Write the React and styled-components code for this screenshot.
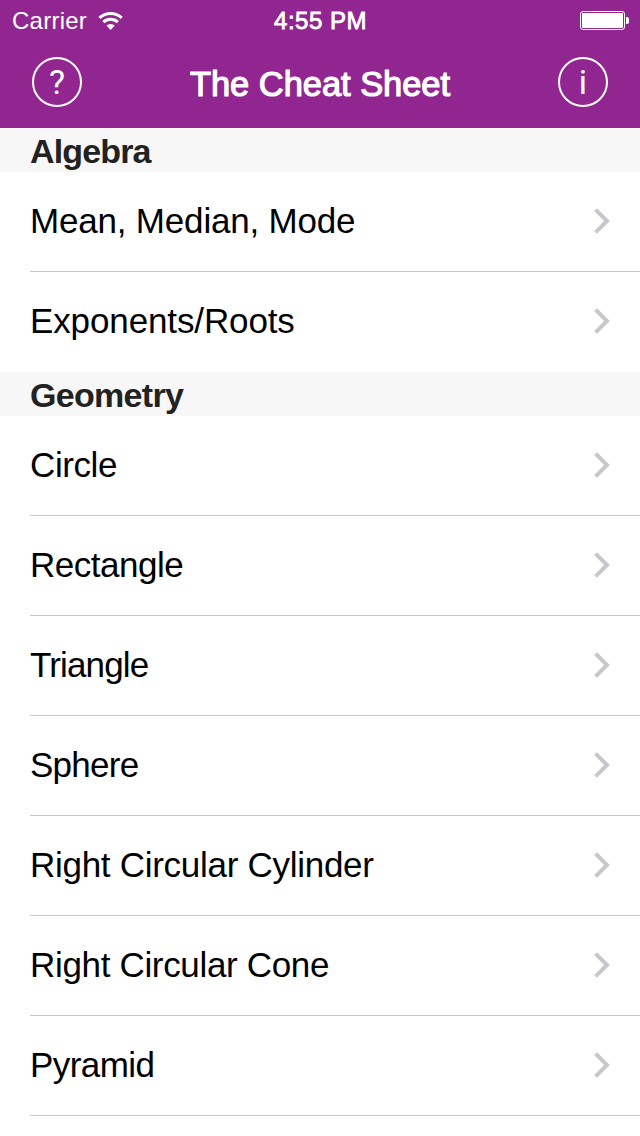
import React from "react";
import styled, { createGlobalStyle } from "styled-components";

const sections = [
  {
    title: "Algebra",
    tracking: -0.85,
    items: [
      { name: "Mean, Median, Mode", tracking: -0.19 },
      { name: "Exponents/Roots", tracking: -0.12 },
    ],
  },
  {
    title: "Geometry",
    tracking: -0.7,
    endDivider: true,
    items: [
      { name: "Circle", tracking: -0.4 },
      { name: "Rectangle", tracking: -0.48 },
      { name: "Triangle", tracking: -0.85 },
      { name: "Sphere", tracking: -0.75 },
      { name: "Right Circular Cylinder", tracking: -0.28 },
      { name: "Right Circular Cone", tracking: -0.33 },
      { name: "Pyramid", tracking: -0.55 },
    ],
  },
];

const App = () => {
  return (
    <Screen>
      <GlobalStyle />
      <Header>
        <StatusBar>
          <Network>
            <Carrier>Carrier</Carrier>
            <WifiIcon />
          </Network>
          <Clock>4:55 PM</Clock>
          <BatteryIcon />
        </StatusBar>
        <NavBar>
          <RoundButton aria-label="Help">?</RoundButton>
          <Title>The Cheat Sheet</Title>
          <RoundButton aria-label="Info">i</RoundButton>
        </NavBar>
      </Header>
      <main>
        {sections.map(({ title, tracking, endDivider, items }) => (
          <section key={title}>
            <SectionTitle $tracking={tracking}>{title}</SectionTitle>
            <List>
              {items.map((item, i) => (
                <Row
                  key={item.name}
                  $divider={endDivider || i < items.length - 1}
                >
                  <Label $tracking={item.tracking}>{item.name}</Label>
                  <Chevron />
                </Row>
              ))}
            </List>
          </section>
        ))}
      </main>
    </Screen>
  );
};

const WifiIcon = () => (
  <svg width="26" height="20" viewBox="0 0 26 20" fill="none">
    <path d="M1.5 6.9a16 16 0 0 1 22.2 0" stroke="#fff" strokeWidth="3" />
    <path d="M5.3 11.2a10.6 10.6 0 0 1 14.6 0" stroke="#fff" strokeWidth="3" />
    <path d="M8.4 14.6a6 6 0 0 1 8.4 0l-4.2 4.4z" fill="#fff" />
  </svg>
);

const BatteryIcon = () => (
  <svg width="49" height="19" viewBox="0 0 49 19">
    <rect
      x="0.5"
      y="0.5"
      width="44"
      height="18"
      rx="2.5"
      fill="none"
      stroke="#fff"
    />
    <rect x="2" y="2" width="41" height="15" rx="1" fill="#fff" />
    <path d="M46 6h1a2 2 0 0 1 2 2v3a2 2 0 0 1-2 2h-1z" fill="#fff" />
  </svg>
);

const Chevron = () => (
  <svg width="18" height="28" viewBox="0 0 18 28" fill="none">
    <path d="M2.6 2.6 14 14 2.6 25.4" stroke="#c7c7cc" strokeWidth="4" />
  </svg>
);

const GlobalStyle = createGlobalStyle`
  * {
    box-sizing: border-box;
  }

  body {
    background: #fff;
    font-family: "Liberation Sans", Arial, sans-serif;
    margin: 0;
  }
`;

const Screen = styled.div`
  height: 1136px;
  overflow: hidden;
  width: 640px;
`;

const Header = styled.header`
  background: #922691;
  color: #fff;
  height: 128px;
`;

const StatusBar = styled.div`
  align-items: center;
  display: grid;
  grid-template-columns: 1fr auto 1fr;
  height: 40px;
  padding: 1px 11px 0 12px;

  > :last-child {
    justify-self: end;
  }
`;

const Network = styled.div`
  align-items: center;
  display: flex;
  gap: 11px;
`;

const Carrier = styled.span`
  font-size: 24px;
  letter-spacing: 0.25px;
  line-height: 28px;
`;

const Clock = styled.span`
  -webkit-text-stroke: 0.8px #fff;
  font-size: 24px;
  letter-spacing: 0.5px;
  line-height: 28px;
`;

const NavBar = styled.nav`
  align-items: center;
  display: flex;
  height: 88px;
  justify-content: space-between;
  padding: 0 32px 4px;
`;

const RoundButton = styled.button`
  align-items: center;
  background: none;
  border: 2px solid #fff;
  border-radius: 50%;
  color: #fff;
  display: flex;
  font-family: Roboto, sans-serif;
  font-size: 34px;
  height: 50px;
  justify-content: center;
  line-height: 46px;
  padding: 0;
  width: 50px;
`;

const Title = styled.h1`
  -webkit-text-stroke: 1.2px #fff;
  font-size: 34.5px;
  font-weight: 400;
  letter-spacing: -0.05px;
  line-height: 40px;
  margin: 4px 0 0;
`;

const SectionTitle = styled.h2`
  background: #f7f7f7;
  color: #222;
  font-size: 34px;
  font-weight: 700;
  height: 44px;
  letter-spacing: ${({ $tracking }) => $tracking}px;
  line-height: 46px;
  margin: 0;
  padding-left: 30px;
`;

const List = styled.ul`
  list-style: none;
  margin: 0;
  padding: 0;
`;

const Row = styled.li`
  align-items: center;
  border-bottom: 1px solid ${({ $divider }) => ($divider ? "#c8c7cc" : "transparent")};
  display: flex;
  height: 100px;
  justify-content: space-between;
  margin-left: 30px;
  padding: 0 29px 1px 0;
`;

const Label = styled.span`
  color: #000;
  font-size: 35px;
  letter-spacing: ${({ $tracking }) => $tracking}px;
  line-height: 40px;
`;

export default App;
